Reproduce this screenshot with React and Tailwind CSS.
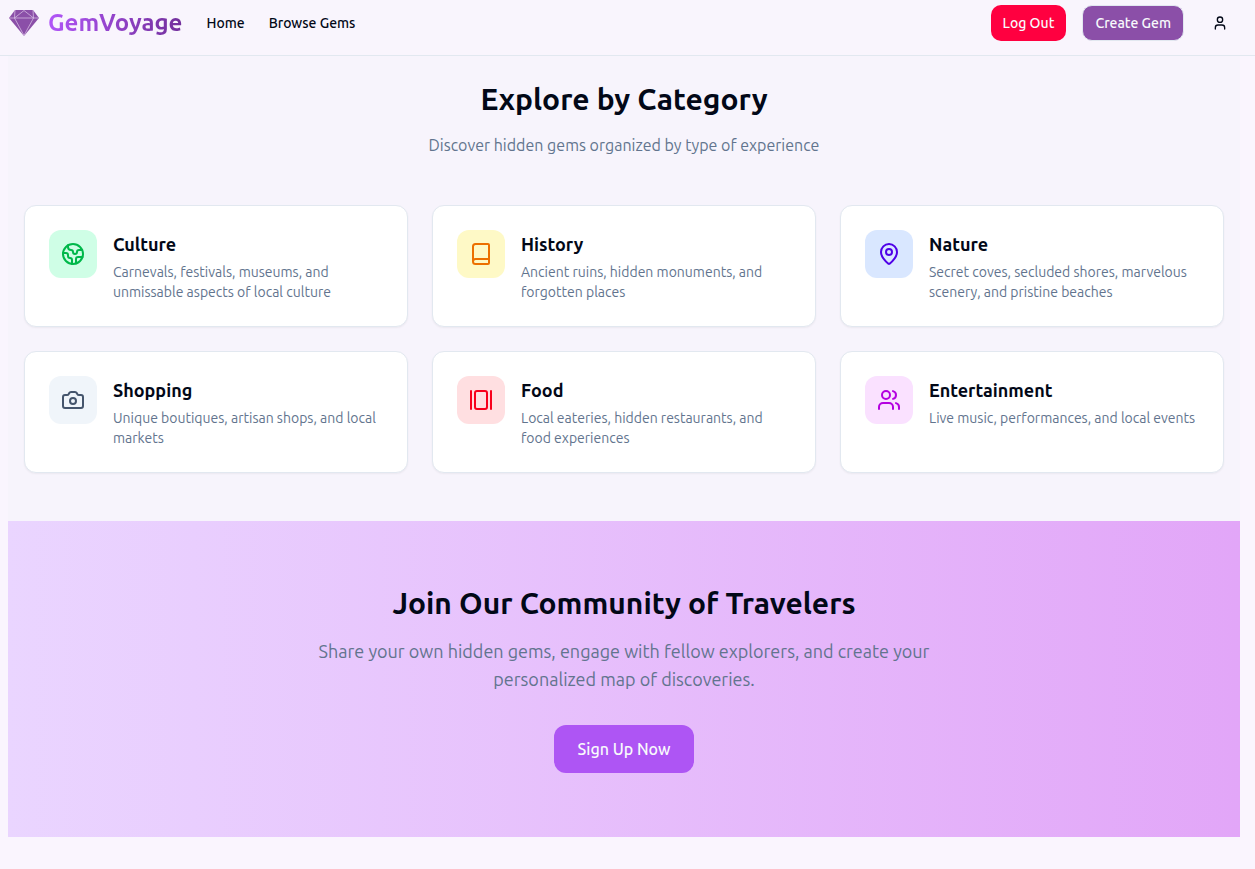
import { Book, Camera, Earth, GalleryHorizontal, MapPin, User, Users } from 'lucide-react';

const CATEGORIES = [
  {
    name: 'Culture',
    description: 'Carnevals, festivals, museums, and unmissable aspects of local culture',
    icon: Earth,
    color: 'bg-[#cffee6] text-[#00b84a]'
  },
  {
    name: 'History',
    description: 'Ancient ruins, hidden monuments, and forgotten places',
    icon: Book,
    color: 'bg-[#fef9c6] text-[#ec7000]'
  },
  {
    name: 'Nature',
    description: 'Secret coves, secluded shores, marvelous scenery, and pristine beaches',
    icon: MapPin,
    color: 'bg-[#d9e7ff] text-[#4f00e8]'
  },
  {
    name: 'Shopping',
    description: 'Unique boutiques, artisan shops, and local markets',
    icon: Camera,
    color: 'bg-[#f0f5fa] text-slate-600'
  },
  {
    name: 'Food',
    description: 'Local eateries, hidden restaurants, and food experiences',
    icon: GalleryHorizontal,
    color: 'bg-[#ffdfe1] text-[#f8001c]'
  },
  {
    name: 'Entertainment',
    description: 'Live music, performances, and local events',
    icon: Users,
    color: 'bg-[#fae1ff] text-[#b400e0]'
  }
];

const GemLogo = () => (
  <svg viewBox="0 0 32 32" className="size-8" aria-hidden="true">
    <path d="M7 3h18l6 8-15 18L1 11z" fill="#8b4fa8" />
    <path
      d="M1.500 11h29M7 3l-.5 8L16 28.500 25.500 11 25 3M6.500 11 16 3.500 25.500 11"
      fill="none"
      stroke="#dcc5e8"
      strokeWidth="0.700"
    />
  </svg>
);

const Header = () => (
  <header className="sticky top-0 z-10 flex h-14 items-center justify-between border-b border-slate-200 bg-[#f9f5fd] pr-[15px] pb-2.5 pl-2">
    <div className="flex items-center gap-6">
      <a href="#" className="flex items-center gap-2">
        <GemLogo />
        <span className="bg-linear-to-r from-[#b156f8] to-[#73309c] bg-clip-text text-2xl font-bold text-transparent">
          GemVoyage
        </span>
      </a>
      <nav className="flex items-center gap-6 text-sm font-medium">
        <a href="#">Home</a>
        <a href="#">Browse Gems</a>
      </nav>
    </div>
    <div className="flex items-center gap-4">
      <button type="button" className="h-9 rounded-[10px] bg-[#ff0040] px-3 text-sm font-medium text-slate-50">
        Log Out
      </button>
      <button type="button" className="h-9 rounded-[10px] border border-slate-200 bg-[#8b4fa8] px-3 text-sm font-medium text-slate-50">
        Create Gem
      </button>
      <button type="button" aria-label="Profile" className="flex size-10 items-center justify-center">
        <User className="size-4" />
      </button>
    </div>
  </header>
);

const CategoryCard = ({ name, description, icon: Icon, color }) => (
  <a href="#" className="flex items-start gap-4 rounded-xl border border-slate-200 bg-white p-6 shadow-xs">
    <div className={`flex size-12 shrink-0 items-center justify-center rounded-xl ${color}`}>
      <Icon className="size-6" />
    </div>
    <div>
      <h3 className="mb-1 text-lg font-semibold">{name}</h3>
      <p className="text-sm text-slate-500">{description}</p>
    </div>
  </a>
);

export default function App() {
  return (
    <div className="min-h-screen bg-[#faf5fe] font-[family-name:Ubuntu,system-ui,sans-serif] text-[#020817]">
      <Header />
      <main className="pr-[15px] pb-8 pl-2">
        <section className="bg-[#f7f4fc] px-4 pt-[25px] pb-12">
          <div className="mb-12 text-center">
            <h2 className="mb-4 text-3xl font-bold">Explore by Category</h2>
            <p className="text-slate-500">Discover hidden gems organized by type of experience</p>
          </div>
          <div className="grid grid-cols-1 gap-6 md:grid-cols-2 lg:grid-cols-3">
            {CATEGORIES.map(category => <CategoryCard key={category.name} {...category} />)}
          </div>
        </section>

        <section className="bg-linear-to-r from-[#ead5ff] to-[#e2a6f8] px-4 py-16 text-center">
          <h2 className="mb-4 text-3xl font-bold">Join Our Community of Travelers</h2>
          <p className="mx-auto mb-8 max-w-2xl text-lg text-slate-500">
            Share your own hidden gems, engage with fellow explorers, and create your personalized map of discoveries.
          </p>
          <button type="button" className="h-12 rounded-xl bg-[#ae55f4] px-6 font-medium text-slate-50">
            Sign Up Now
          </button>
        </section>
      </main>
    </div>
  );
}
